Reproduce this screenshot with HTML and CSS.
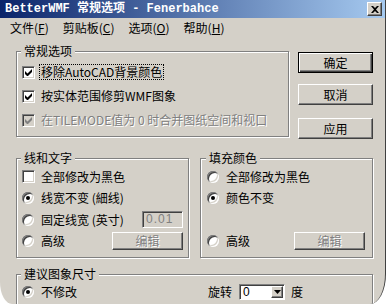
FILE: index.html
```html
<!DOCTYPE html>
<html>
<head lang="zh-CN">
    <meta charset="UTF-8">
    <title>BetterWMF 常规选项</title>
    <link rel="stylesheet" href="styles.css">
</head>
<body>
    <div class="window">
        <div class="titlebar">
            <span class="title">BetterWMF 常规选项 - Fenerbahce</span>
            <span class="closebtn">
                <svg width="8" height="7" viewBox="0 0 8 7"><path d="M0 0h2l2 2 2-2h2l-3 3.5 3 3.5h-2l-2-2-2 2h-2l3-3.5z" fill="#000"/></svg>
            </span>
        </div>

        <ul class="menubar">
            <li>文件(<u>F</u>)</li>
            <li>剪贴板(<u>C</u>)</li>
            <li>选项(<u>O</u>)</li>
            <li>帮助(<u>H</u>)</li>
        </ul>

        <div class="content">
            <div class="toprow">
                <fieldset class="group group-general">
                    <legend>常规选项</legend>
                    <div class="row">
                        <span class="check"><svg width="7" height="7" viewBox="0 0 7 7"><path d="M0 2L2.5 4.5L7 0V3L2.5 7.5L0 5Z"/></svg></span>
                        <span class="label focus">移除AutoCAD背景颜色</span>
                    </div>
                    <div class="row">
                        <span class="check"><svg width="7" height="7" viewBox="0 0 7 7"><path d="M0 2L2.5 4.5L7 0V3L2.5 7.5L0 5Z"/></svg></span>
                        <span class="label">按实体范围修剪WMF图象</span>
                    </div>
                    <div class="row">
                        <span class="check disabled"><svg width="7" height="7" viewBox="0 0 7 7"><path d="M0 2L2.5 4.5L7 0V3L2.5 7.5L0 5Z"/></svg></span>
                        <span class="label disabled">在TILEMODE值为 0 时合并图纸空间和视口</span>
                    </div>
                </fieldset>

                <div class="buttons">
                    <div class="btn default">确定</div>
                    <div class="btn btn-cancel">取消</div>
                    <div class="btn btn-apply">应用</div>
                </div>
            </div>

            <div class="midrow">
                <fieldset class="group group-half">
                    <legend>线和文字</legend>
                    <div class="row row-sm">
                        <span class="check"></span>
                        <span class="label">全部修改为黑色</span>
                    </div>
                    <div class="row row-sm">
                        <span class="radio selected"></span>
                        <span class="label">线宽不变 (細线)</span>
                    </div>
                    <div class="row row-sm">
                        <span class="radio"></span>
                        <span class="label">固定线宽 (英寸)</span>
                        <span class="textbox">0.01</span>
                    </div>
                    <div class="row row-sm">
                        <span class="radio"></span>
                        <span class="label">高级</span>
                        <span class="btn btn-edit">编辑</span>
                    </div>
                </fieldset>

                <fieldset class="group group-half group-fill">
                    <legend>填充颜色</legend>
                    <div class="row row-sm">
                        <span class="radio"></span>
                        <span class="label">全部修改为黑色</span>
                    </div>
                    <div class="row row-sm">
                        <span class="radio selected"></span>
                        <span class="label">颜色不变</span>
                    </div>
                    <div class="row row-sm"></div>
                    <div class="row row-sm">
                        <span class="radio"></span>
                        <span class="label">高级</span>
                        <span class="btn btn-edit">编辑</span>
                    </div>
                </fieldset>
            </div>

            <fieldset class="group group-size">
                <legend>建议图象尺寸</legend>
                <div class="row row-size">
                    <span class="radio selected"></span>
                    <span class="label label-keep">不修改</span>
                    <span class="label">旋转</span>
                    <span class="combo">
                        <span class="combo-value">0</span>
                        <span class="combo-arrow"><svg width="7" height="4" viewBox="0 0 7 4"><path d="M0 0h7L3.5 4z"/></svg></span>
                    </span>
                    <span class="label">度</span>
                </div>
            </fieldset>
        </div>
    </div>
</body>
</html>
```

FILE: styles.css
```css
body {
    margin: 0;
    background-color: #fff;
    font-family: "Noto Sans CJK SC", "Liberation Sans", sans-serif;
    font-size: 12px;
    line-height: 14px;
    color: #000;
}
.window {
    width: 385px;
    height: 304px;
    background-color: #d4d0c8;
    border-right: 1px solid #404040;
    border-radius: 0 0 16px 12px / 0 0 30px 22px;
    overflow: hidden;
}

/* title bar */
.titlebar {
    height: 18px;
    display: flex;
    align-items: center;
    padding: 0 3px 0 5px;
    background: linear-gradient(to right, #0a246a, #a6caf0);
}
.title {
    font-family: "Liberation Mono", "Noto Sans CJK SC", monospace;
    font-weight: bold;
    color: #fff;
    white-space: pre;
}
.closebtn {
    margin-left: auto;
    width: 15px;
    height: 14px;
    box-sizing: border-box;
    display: flex;
    align-items: center;
    justify-content: center;
    background-color: #d4d0c8;
    border: 1px solid;
    border-color: #fff #404040 #404040 #fff;
    box-shadow: inset -1px -1px 0 #808080;
}

/* menu */
.menubar {
    display: flex;
    gap: 14px;
    height: 18px;
    box-sizing: border-box;
    margin: 0;
    padding: 3px 0 0 10px;
    list-style: none;
}

/* content */
.content {
    width: 357px;
    padding: 8px 0 0 16px;
}
.toprow {
    display: flex;
    align-items: flex-start;
}
.midrow {
    display: flex;
    justify-content: space-between;
    margin-top: 12px;
}

/* group boxes */
.group {
    margin: 0;
    padding: 2px 5px 4px 5px;
    min-width: 0;
    border: 1px solid #808080;
    box-shadow: inset 1px 1px 0 #fff, 1px 1px 0 #fff;
}
.group legend {
    padding: 0 3px;
    margin-left: -1px;
    background-color: #d4d0c8;
}
.group-general {
    width: 273px;
    box-sizing: border-box;
}
.group-half {
    width: 173px;
    box-sizing: border-box;
    padding: 1px 5px 5px 5px;
}
.group-fill {
    padding-left: 6px;
    padding-right: 7px;
}
.group-size {
    margin-top: 9px;
    padding: 0 5px 10px 5px;
}

/* rows */
.row {
    display: flex;
    align-items: center;
    gap: 5px;
    height: 24px;
}
.row-sm {
    height: 21.5px;
}
.row-size {
    height: 22px;
}
.label {
    padding: 0 1px;
    white-space: nowrap;
}
.focus {
    outline: 1px dotted #000;
    outline-offset: 0;
}
.label.disabled {
    color: #808080;
    text-shadow: 1px 1px 0 #fff;
}
.label-keep {
    width: 160px;
}

/* checkbox */
.check {
    width: 13px;
    height: 13px;
    box-sizing: border-box;
    flex: none;
    display: flex;
    align-items: center;
    justify-content: center;
    background-color: #fff;
    border: 1px solid;
    border-color: #808080 #fff #fff #808080;
    box-shadow: inset 1px 1px 0 #404040, inset -1px -1px 0 #d4d0c8;
}
.check.disabled {
    background-color: #d4d0c8;
}
.check.disabled svg {
    fill: #808080;
}

/* radio */
.radio {
    width: 12px;
    height: 12px;
    flex: none;
    margin: 0 1px 0 0;
    border-radius: 50%;
    background-color: #fff;
    display: flex;
    align-items: center;
    justify-content: center;
    box-shadow: inset 1px 1px 0 #808080, inset -1px -1px 0 #fff,
                inset 2px 2px 0 #404040, inset -2px -2px 0 #d4d0c8;
}
.radio.selected::after {
    content: "";
    width: 4px;
    height: 4px;
    border-radius: 50%;
    background-color: #000;
}

/* buttons */
.buttons {
    margin-left: auto;
    width: 75px;
    padding-top: 8px;
}
.btn {
    box-sizing: border-box;
    display: flex;
    align-items: center;
    justify-content: center;
    height: 21px;
    background-color: #d4d0c8;
    border: 1px solid;
    border-color: #fff #404040 #404040 #fff;
    box-shadow: inset -1px -1px 0 #808080;
}
.btn.default {
    border-color: #000;
    box-shadow: inset 1px 1px 0 #fff, inset -1px -1px 0 #404040, inset -2px -2px 0 #808080;
}
.btn-cancel {
    margin-top: 11px;
}
.btn-apply {
    margin-top: 13px;
}
.btn-edit {
    margin-left: auto;
    width: 71px;
    height: 18px;
    color: #808080;
    text-shadow: 1px 1px 0 #fff;
}

/* text box */
.textbox {
    margin-left: auto;
    width: 41px;
    height: 17px;
    box-sizing: border-box;
    padding-left: 3px;
    line-height: 15px;
    color: #808080;
    font-family: "Liberation Sans", sans-serif;
    letter-spacing: 1px;
    background-color: #d4d0c8;
    border: 1px solid;
    border-color: #808080 #fff #fff #808080;
    box-shadow: inset 1px 1px 0 #404040, inset -1px -1px 0 #d4d0c8;
}

/* combo */
.combo {
    width: 46px;
    height: 16px;
    box-sizing: border-box;
    display: flex;
    align-items: center;
    padding: 0 1px 0 3px;
    margin-left: 1px;
    background-color: #fff;
    border: 1px solid;
    border-color: #808080 #fff #fff #808080;
    box-shadow: inset 1px 1px 0 #404040;
}
.combo-value {
    font-family: "Liberation Sans", sans-serif;
}
.combo-arrow {
    margin-left: auto;
    width: 12px;
    height: 12px;
    box-sizing: border-box;
    display: flex;
    align-items: center;
    justify-content: center;
    background-color: #d4d0c8;
    border: 1px solid;
    border-color: #fff #404040 #404040 #fff;
    box-shadow: inset -1px -1px 0 #808080;
}
```
